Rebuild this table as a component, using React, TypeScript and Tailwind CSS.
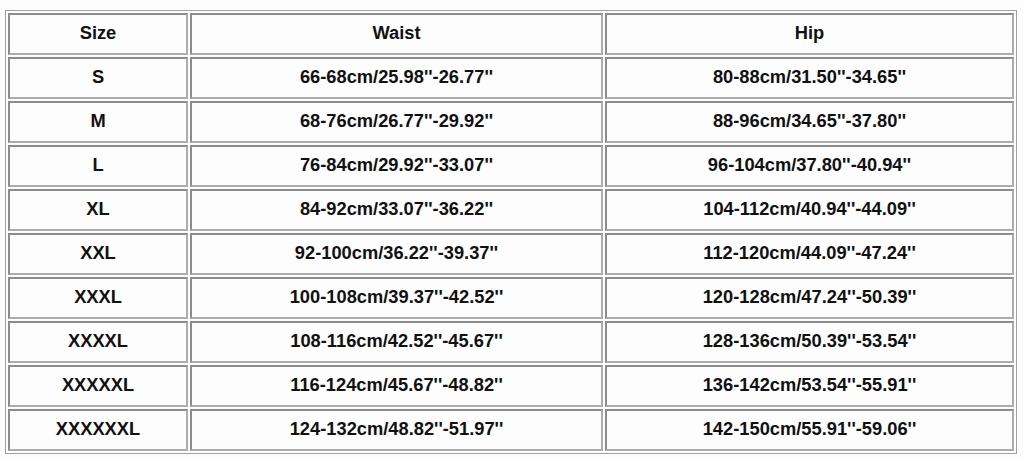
const rows = [
  ['S', "66-68cm/25.98''-26.77''", "80-88cm/31.50''-34.65''"],
  ['M', "68-76cm/26.77''-29.92''", "88-96cm/34.65''-37.80''"],
  ['L', "76-84cm/29.92''-33.07''", "96-104cm/37.80''-40.94''"],
  ['XL', "84-92cm/33.07''-36.22''", "104-112cm/40.94''-44.09''"],
  ['XXL', "92-100cm/36.22''-39.37''", "112-120cm/44.09''-47.24''"],
  ['XXXL', "100-108cm/39.37''-42.52''", "120-128cm/47.24''-50.39''"],
  ['XXXXL', "108-116cm/42.52''-45.67''", "128-136cm/50.39''-53.54''"],
  ['XXXXXL', "116-124cm/45.67''-48.82''", "136-142cm/53.54''-55.91''"],
  ['XXXXXXL', "124-132cm/48.82''-51.97''", "142-150cm/55.91''-59.06''"],
]

const cell =
  'h-[42px] p-0 pb-[3px] text-center align-middle border-2 border-t-[#8c8c8c] border-l-[#8c8c8c] border-r-[#acacac] border-b-[#acacac]'

export default function App() {
  return (
    <div className="w-[1024px] h-[459px] bg-[#fdfdfd] pt-[10px] pl-[5px] font-['Liberation_Sans',Arial,sans-serif] text-[18.3px] font-bold text-[#111]">
      {/* size chart */}
      <table className="w-[1012px] table-fixed border-separate border-spacing-x-[2px] border-spacing-y-[2.4px] border border-[#a0a0a0]">
        <colgroup>
          <col className="w-[180px]" />
          <col className="w-[413px]" />
          <col />
        </colgroup>
        <thead>
          <tr>
            <th className={cell}>Size</th>
            <th className={cell}>Waist</th>
            <th className={cell}>Hip</th>
          </tr>
        </thead>
        <tbody>
          {rows.map(([size, waist, hip]) => (
            <tr key={size}>
              <td className={cell}>{size}</td>
              <td className={cell}>{waist}</td>
              <td className={cell}>{hip}</td>
            </tr>
          ))}
        </tbody>
      </table>
    </div>
  )
}
